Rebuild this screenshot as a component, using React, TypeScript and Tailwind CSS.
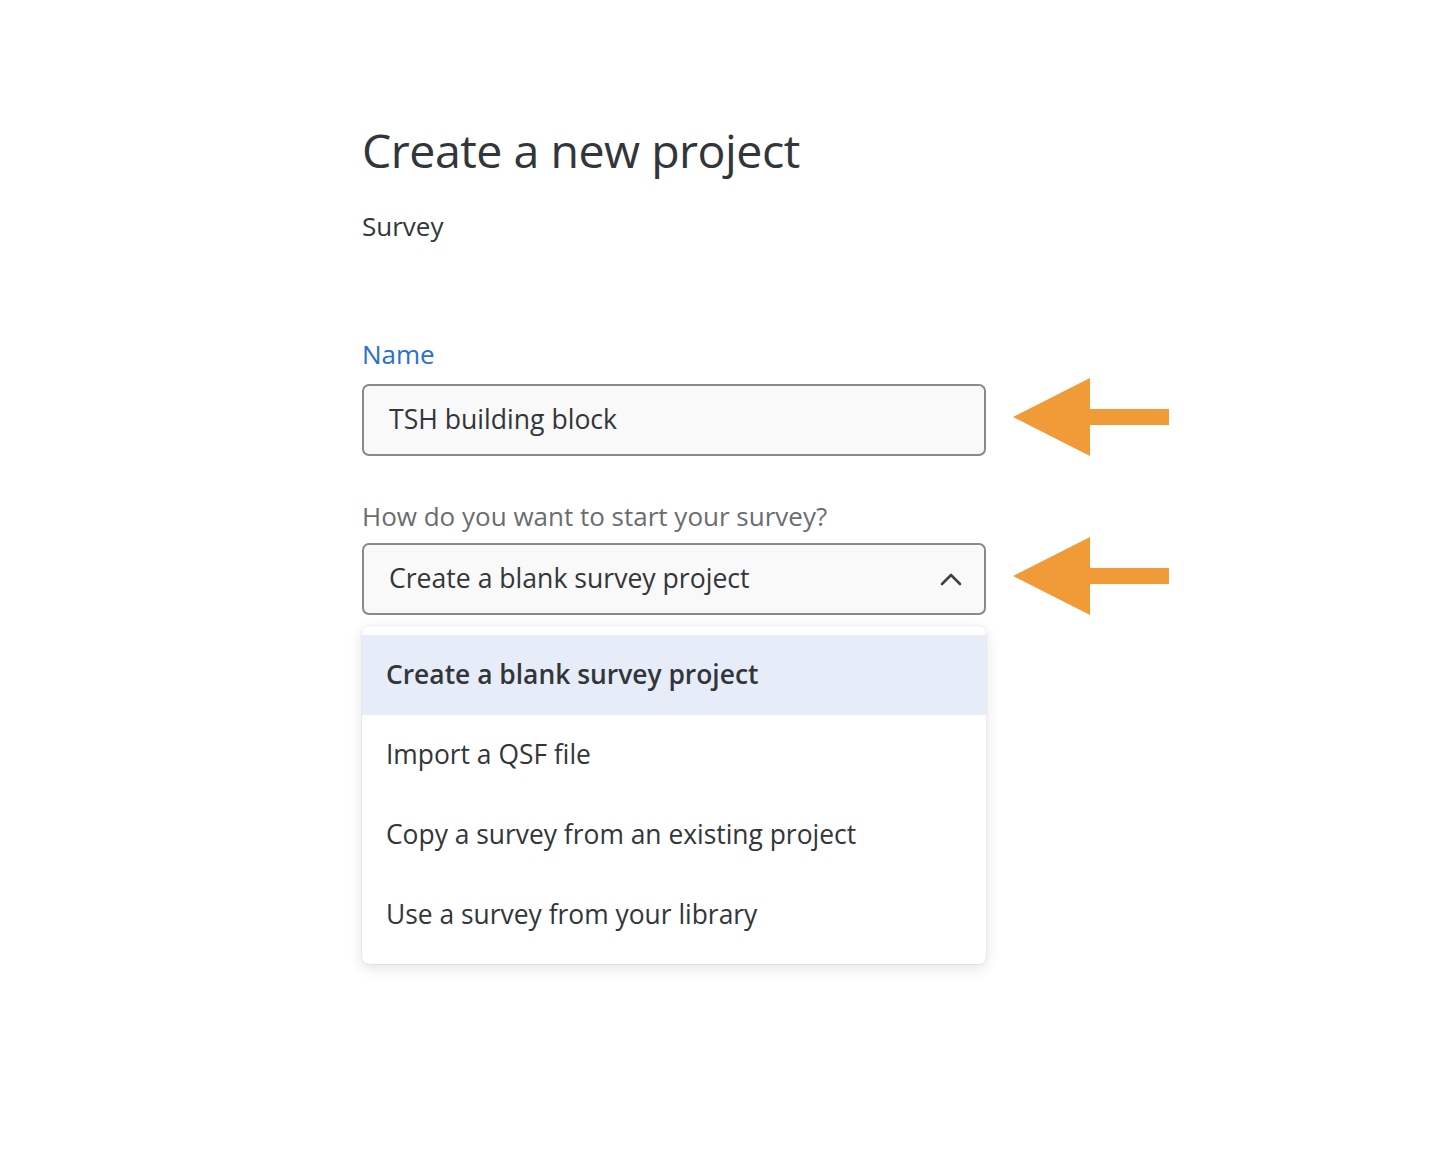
import React from "react";

function Arrow() {
  return (
    <svg width="156" height="78" viewBox="0 0 156 78" className="block -translate-y-[3px]">
      <polygon points="0,39 77,0 77,31 156,31 156,47 77,47 77,78" fill="#F09A38" />
    </svg>
  );
}

export default function App() {
  const items = [
    "Create a blank survey project",
    "Import a QSF file",
    "Copy a survey from an existing project",
    "Use a survey from your library",
  ];
  return (
    <div
      className="w-[1442px] h-[1152px] bg-white text-[#32363a]"
      style={{ fontFamily: '"Open Sans", "Noto Sans", sans-serif' }}
    >
      <div className="pl-[362px] pt-[118px]">
        <h1 className="text-[46.5px] leading-[64px] tracking-[-0.5px] text-[#32363a]">Create a new project</h1>
        <div className="mt-[27px] text-[26px] leading-[34px]">Survey</div>

        <div className="mt-[94px] text-[26px] leading-[34px] text-[#2b6fcf]">Name</div>
        <div className="mt-[10px] flex items-center gap-[27px]">
          <div className="w-[624px] h-[72px] rounded-[7px] border-2 border-[#89898b] bg-[#f9f9f9] flex items-center pl-[25px] text-[26.6px]">
            TSH building block
          </div>
          <Arrow />
        </div>

        <div className="mt-[40px] text-[26px] leading-[34px] text-[#6a6d70]">How do you want to start your survey?</div>
        <div className="mt-[7px] flex items-center gap-[27px]">
          <div className="w-[624px] h-[72px] rounded-[7px] border-2 border-[#89898b] bg-[#f9f9f9] flex items-center justify-between pl-[25px] pr-[22px] text-[26.6px]">
            <span>Create a blank survey project</span>
            <svg width="22" height="14" viewBox="0 0 22 14">
              <polyline points="2,12 11,3 20,12" fill="none" stroke="#3f4246" strokeWidth="2.6" strokeLinecap="round" strokeLinejoin="round" />
            </svg>
          </div>
          <Arrow />
        </div>

        <div className="mt-[8px] w-[624px] rounded-[7px] bg-white py-[9px] shadow-[0_4px_14px_rgba(0,0,0,0.12),0_0_2px_rgba(0,0,0,0.12)]">
          {items.map((t, i) => (
            <div
              key={t}
              className={
                "h-[80px] flex items-center pl-[24px] text-[26.4px] " +
                (i === 0 ? "bg-[#e6edf8] font-semibold" : "")
              }
            >
              {t}
            </div>
          ))}
        </div>
      </div>
    </div>
  );
}
